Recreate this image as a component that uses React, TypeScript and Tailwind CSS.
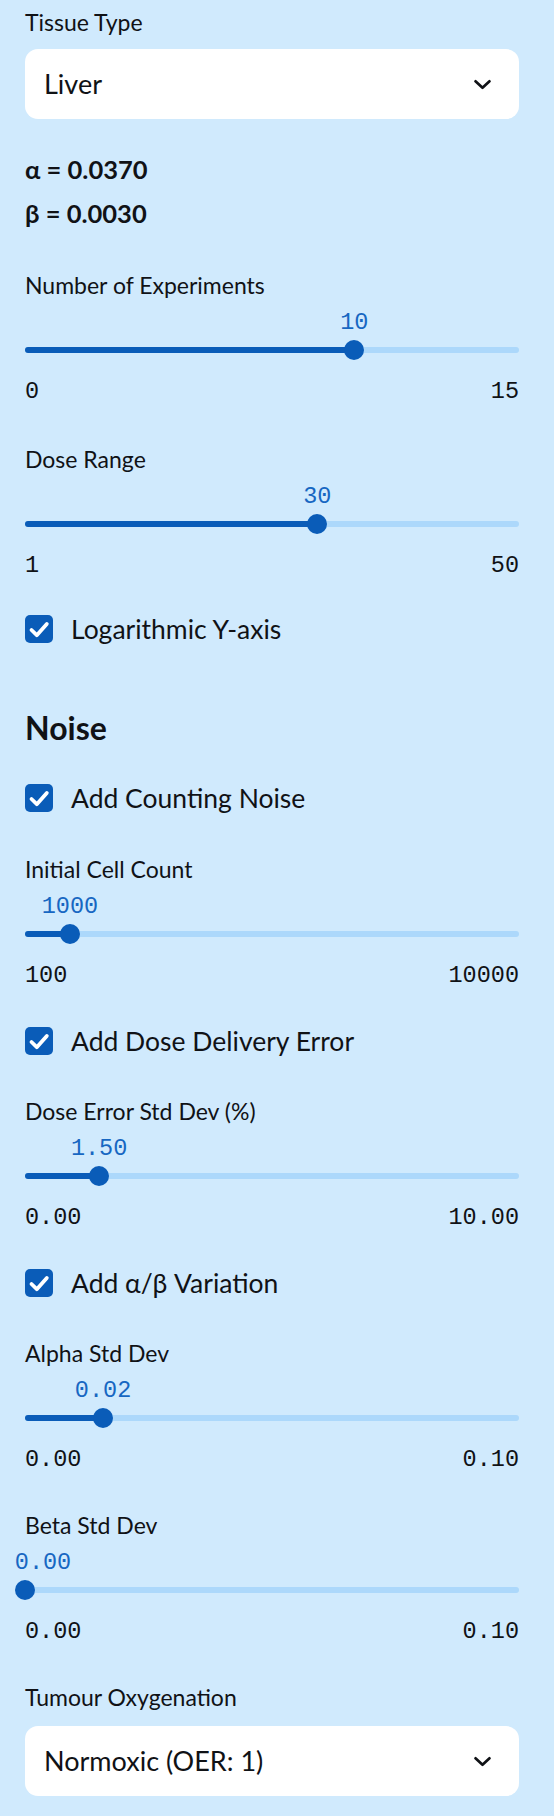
import React from "react";

const ink = "text-[#101216]";

function Label({ text }: { text: string }) {
  return <div className={`h-[30px] text-[23px] leading-[30px] ${ink}`}>{text}</div>;
}

function Chevron() {
  return (
    <svg width="19" height="11" viewBox="0 0 19 11" fill="none" className="shrink-0">
      <path d="M2.5 2.3 L9.5 8.8 L16.5 2.3" stroke="#101216" strokeWidth="2.7" strokeLinecap="round" strokeLinejoin="round" />
    </svg>
  );
}

function SelectBox({ value, className = "" }: { value: string; className?: string }) {
  return (
    <div className={`flex h-[70px] items-center justify-between rounded-[13px] bg-white pl-[19px] pr-[27px] ${className}`}>
      <span className={`text-[27px] leading-[32px] ${ink}`}>{value}</span>
      <Chevron />
    </div>
  );
}

function Check({ text, className = "" }: { text: string; className?: string }) {
  return (
    <div className={`flex h-[28px] items-center gap-[18px] ${className}`}>
      <span className="flex h-[28px] w-[28px] shrink-0 items-center justify-center rounded-[5px] bg-[#0a5cb8]">
        <svg width="28" height="28" viewBox="0 0 28 28" fill="none">
          <path d="M6.5 15 L11.8 20.2 L21.8 9" stroke="white" strokeWidth="3.8" strokeLinecap="round" strokeLinejoin="round" />
        </svg>
      </span>
      <span className={`text-[26.5px] leading-[28px] ${ink}`}>{text}</span>
    </div>
  );
}

type SliderProps = {
  label: string;
  value: string;
  min: string;
  max: string;
  pct: number;
  shift?: number;
  className?: string;
};

function Slider({ label, value, min, max, pct, shift = 0, className = "" }: SliderProps) {
  return (
    <div className={className}>
      <Label text={label} />
      {/* thumb value */}
      <div className="relative mt-[11px] h-[24px]">
        <span
          className="absolute top-0 -translate-x-1/2 font-['Liberation_Mono',monospace] text-[23.5px] leading-[24px] text-[#1767c2]"
          style={{ left: `calc(${pct}% + ${shift}px)` }}
        >
          {value}
        </span>
      </div>
      {/* track */}
      <div className="relative mt-[5px] h-[20px]">
        <div className="absolute inset-x-0 top-[7px] h-[6px] rounded-full bg-[#acd8fb]" />
        <div className="absolute left-0 top-[7px] h-[6px] rounded-full bg-[#0a5cb8]" style={{ width: `${pct}%` }} />
        <div
          className="absolute top-0 h-[20px] w-[20px] -translate-x-1/2 rounded-full bg-[#0a5cb8]"
          style={{ left: `${pct}%` }}
        />
      </div>
      <div className={`mt-[20px] flex h-[24px] justify-between font-['Liberation_Mono',monospace] text-[23.5px] leading-[24px] ${ink}`}>
        <span>{min}</span>
        <span>{max}</span>
      </div>
    </div>
  );
}

export default function App() {
  return (
    <div className="min-h-screen bg-[#d0eafd] pl-[25px] pt-[7px] font-['Lato','Noto_Sans',sans-serif]">
      <div className="flex w-[494px] flex-col">
        <Label text="Tissue Type" />
        <SelectBox value="Liver" className="mt-[12px]" />

        <div className={`mt-[28px] text-[25.5px] font-bold leading-[44px] ${ink}`}>
          <div>α = 0.0370</div>
          <div>β = 0.0030</div>
        </div>

        <Slider className="mt-[35px]" label="Number of Experiments" value="10" min="0" max="15" pct={66.67} />
        <Slider className="mt-[40px]" label="Dose Range" value="30" min="1" max="50" pct={59.18} />

        <Check className="mt-[37px]" text="Logarithmic Y-axis" />

        <h2 className={`mt-[65px] h-[40px] text-[32px] font-bold leading-[40px] ${ink}`}>Noise</h2>

        <Check className="mt-[36px]" text="Add Counting Noise" />
        <Slider className="mt-[42px]" label="Initial Cell Count" value="1000" min="100" max="10000" pct={9.09} />

        <Check className="mt-[39px]" text="Add Dose Delivery Error" />
        <Slider className="mt-[41px]" label="Dose Error Std Dev (%)" value="1.50" min="0.00" max="10.00" pct={15} />

        <Check className="mt-[39px]" text="Add α/β Variation" />
        <Slider className="mt-[41px]" label="Alpha Std Dev" value="0.02" min="0.00" max="0.10" pct={15.8} />
        <Slider className="mt-[38px]" label="Beta Std Dev" value="0.00" min="0.00" max="0.10" pct={0} shift={18} />

        <div className="mt-[38px]">
          <Label text="Tumour Oxygenation" />
        </div>
        <SelectBox value="Normoxic (OER: 1)" className="mt-[14px]" />
      </div>
    </div>
  );
}
